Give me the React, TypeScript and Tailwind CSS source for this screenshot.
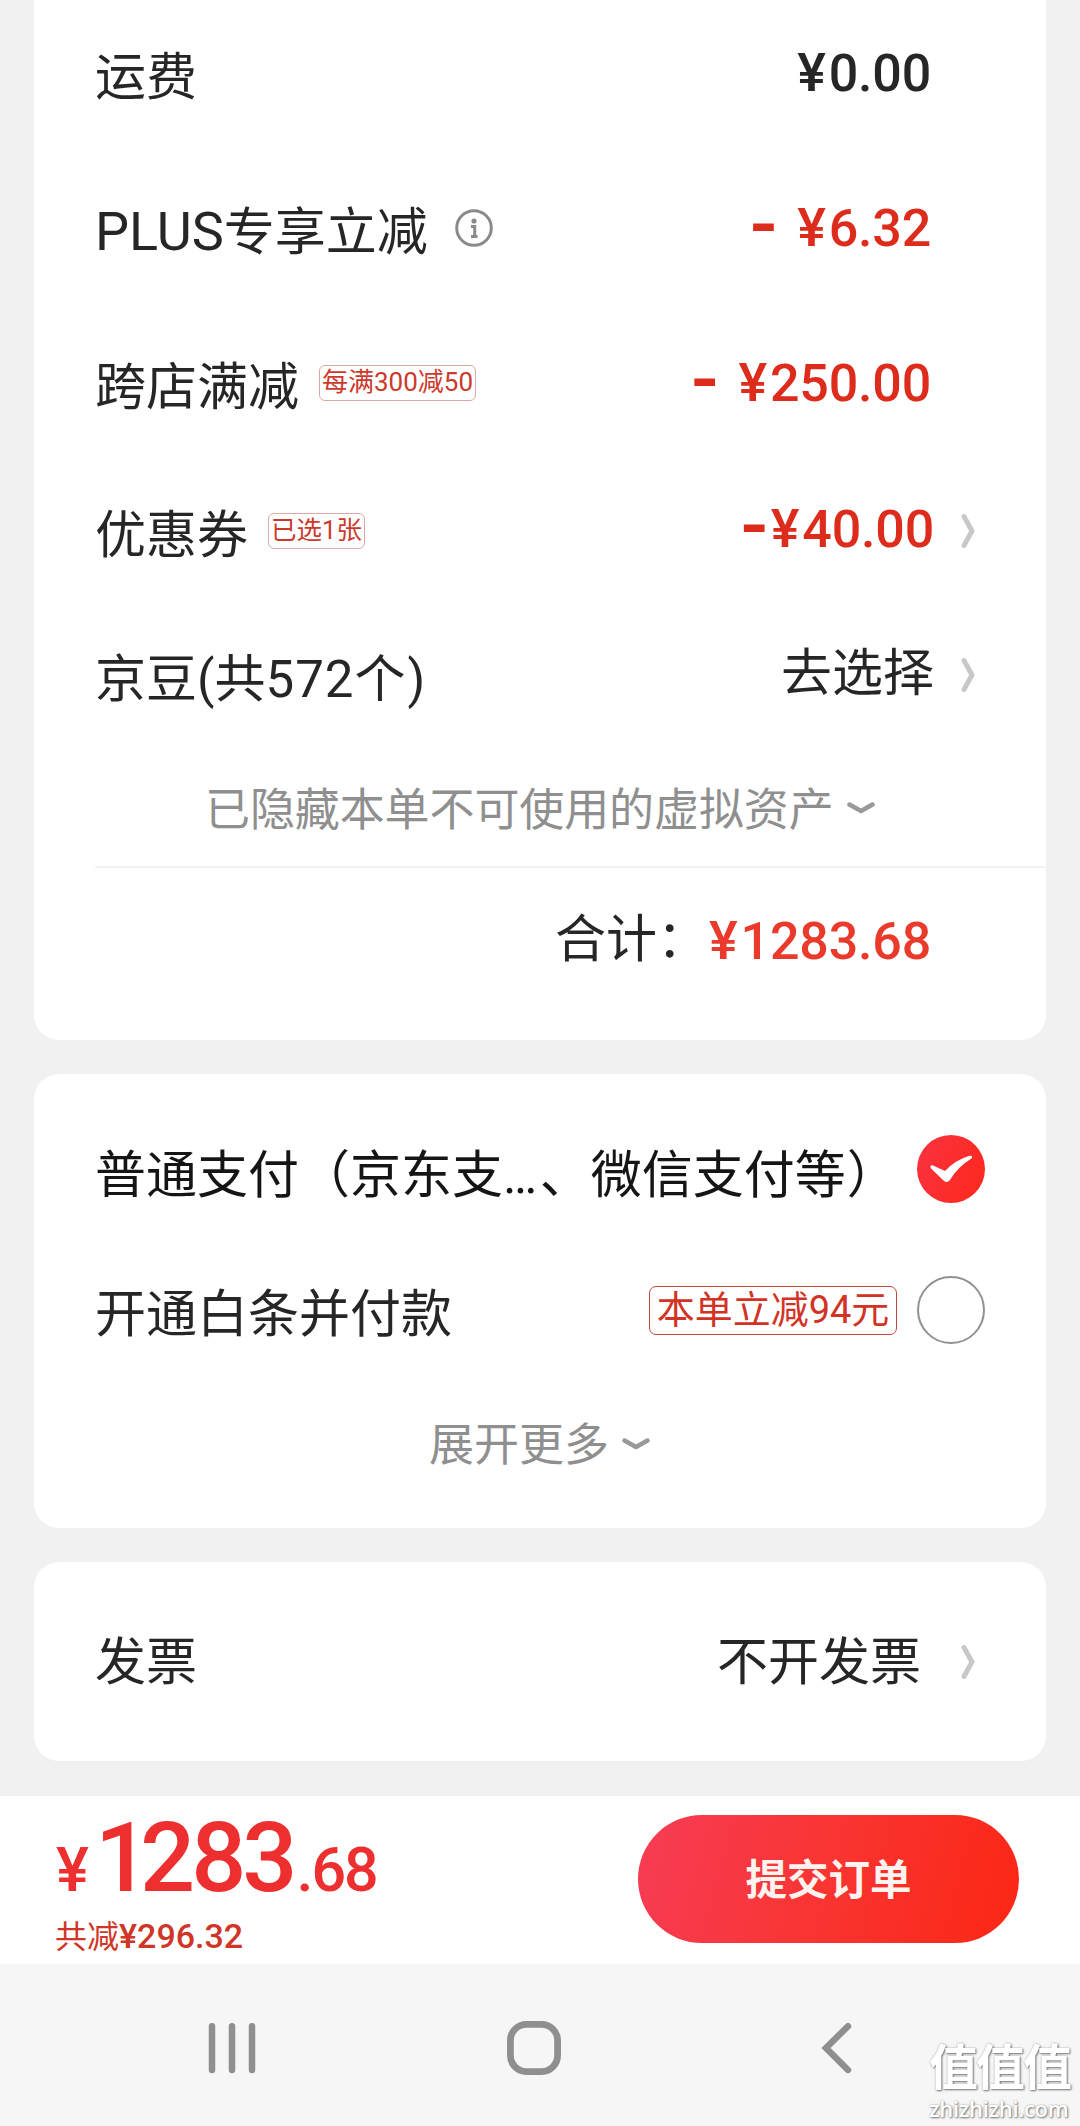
import type { ReactNode } from "react";

function ArrowRight() {
  return (
    <svg width="14" height="36" viewBox="0 0 14 36" fill="none" className="mr-[11px] ml-[27px] shrink-0">
      <path d="M3 3.5 L11 18 L3 32.5" stroke="#c8c8c8" strokeWidth="5" strokeLinecap="round" strokeLinejoin="miter" />
    </svg>
  );
}

function ArrowDown() {
  return (
    <svg width="28" height="13" viewBox="0 0 28 13" fill="none" className="mb-[3px] ml-[13px] shrink-0">
      <path d="M2.5 2.5 L14 9 L25.5 2.5" stroke="#999999" strokeWidth="4.5" strokeLinecap="round" strokeLinejoin="round" />
    </svg>
  );
}

function InfoIcon() {
  return (
    <svg width="38" height="38" viewBox="0 0 38 38" fill="none" className="ml-[27px] mb-[9px]">
      <circle cx="19" cy="19" r="17.3" stroke="#8a8a8a" strokeWidth="3" />
      <circle cx="19" cy="12" r="2.6" fill="#8a8a8a" />
      <path d="M16 17.5 H19.7 V27 M16 27.5 H22.5" stroke="#8a8a8a" strokeWidth="3" />
    </svg>
  );
}

function CheckedIcon() {
  return (
    <svg width="68" height="68" viewBox="0 0 68 68">
      <defs>
        <linearGradient id="check" x1="0" y1="0" x2="1" y2="0.4">
          <stop offset="0" stopColor="#fa3240" />
          <stop offset="1" stopColor="#fd2a22" />
        </linearGradient>
      </defs>
      <circle cx="34" cy="34" r="34" fill="url(#check)" />
      <path
        d="M15.5 30.3 L28 36 Q38 25 52.5 20.7 Q56.5 20.3 54.5 23.5 Q40.5 32 33 45 Q29.5 49 26 45 L13.6 33 Q12.8 29.8 15.5 30.3 Z"
        fill="#fff"
      />
    </svg>
  );
}

function Row({ label, height, children }: { label: ReactNode; height: string; children: ReactNode }) {
  return (
    <div className={`flex items-center justify-between ${height}`}>
      <div className="flex items-center">{label}</div>
      <div className="flex items-center">{children}</div>
    </div>
  );
}

function Price({ value, className }: { value: string; className: string }) {
  return (
    <span className={`text-[52px] leading-[52px] font-medium tracking-[-0.2px] ${className}`}>
      <span className="mr-[3px] text-[54px] leading-[52px]">¥</span>
      {value}
    </span>
  );
}

function Minus({ className }: { className: string }) {
  return <span className={`text-[80px] leading-[52px] font-medium text-[#dd2c1c] ${className}`}>-</span>;
}

const tag = "flex items-center justify-center rounded-[6px] border border-[#dba8a2] text-[#cb3a2c]";

export default function App() {
  return (
    <div className="relative flex h-[2126px] w-[1080px] flex-col overflow-hidden bg-[#f1f1f1] font-[Roboto,'Noto_Sans_CJK_SC',sans-serif] text-[51px] leading-none text-[#262626]">
      {/* Price breakdown */}
      <section className="mx-[34px] h-[1040px] shrink-0 rounded-b-[25px] bg-white pl-[61px]">
        <div className="pr-[60px]">
          <Row height="h-[155px]" label="运费">
            <Price value="0.00" className="mr-[55px] pb-[9px]" />
          </Row>
          <Row height="h-[155px]" label={<><span className="pb-[1px] text-[54px]">PLUS</span>专享立减<InfoIcon /></>}>
            <Minus className="mr-[20px] pb-[15px]" />
            <Price value="6.32" className="mr-[55px] pb-[9px] text-[#dd2c1c]" />
          </Row>
          <Row
            height="h-[155px]"
            label={<>跨店满减<span className={`${tag} mb-[9px] ml-[20px] h-[36px] w-[157px] pb-[2px] text-[26px]`}>每满300减50</span></>}
          >
            <Minus className="mr-[20px] pb-[15px]" />
            <Price value="250.00" className="mr-[55px] pb-[9px] text-[#dd2c1c]" />
          </Row>
          <Row
            height="h-[141px]"
            label={<>优惠券<span className={`${tag} mb-[9px] ml-[20px] h-[36px] w-[97px] pb-[1px] text-[25.5px]`}>已选1张</span></>}
          >
            <Minus className="mr-[3px] pb-[19px]" />
            <Price value="40.00" className="pb-[13px] text-[#dd2c1c]" />
            <span className="pb-[9px]"><ArrowRight /></span>
          </Row>
          <Row height="h-[146px]" label={<>京豆(共<span className="tracking-[1px]">572</span>个<span className="ml-[2px]">)</span></>}>
            <span className="pb-[12px]">去选择</span>
            <span className="pb-[9px]"><ArrowRight /></span>
          </Row>
          <div className="flex h-[114px] items-center pt-[2px] pl-[110px] text-[45px] text-[#8f8f8f]">
            <span className="tracking-[-0.1px]">已隐藏本单不可使用的虚拟资产</span>
            <ArrowDown />
          </div>
        </div>
        <div className="h-[2px] bg-[#f2f2f2]" />
        <div className="flex h-[143px] items-center justify-end pr-[115px]">
          <span className="mr-[1px]">合计：</span>
          <Price value="1283.68" className="pt-[4px] text-[#e93a2c]" />
        </div>
      </section>

      {/* Payment methods */}
      <section className="mx-[34px] mt-[34px] h-[454px] shrink-0 rounded-[25px] bg-white pt-[32px] pr-[61px] pl-[61px]">
        <Row
          height="h-[139px]"
          label={
            <span className="text-[#151515]">
              普通支付（京东支<span className="tracking-[2.5px]">…</span>、微信支付等<span className="ml-[1px]">）</span>
            </span>
          }
        >
          <span className="pb-[13px]"><CheckedIcon /></span>
        </Row>
        <Row height="h-[138px]" label="开通白条并付款">
          <span className="mb-[8px] flex h-[49px] w-[248px] items-center justify-center rounded-[7px] border-[1.5px] border-[#c4453a] text-[38px] text-[#d23324]">
            本单立减94元
          </span>
          <span className="mb-[8px] ml-[20px] h-[68px] w-[68px] rounded-full border-2 border-[#919191]" />
        </Row>
        <div className="flex h-[125px] items-center pl-[334px] text-[45px] text-[#8f8f8f]">
          展开更多
          <ArrowDown />
        </div>
      </section>

      {/* Invoice */}
      <section className="mx-[34px] mt-[34px] h-[199px] shrink-0 rounded-[25px] bg-white pr-[60px] pl-[61px]">
        <Row height="h-[200px]" label="发票">
          <span className="mr-[13px]">不开发票</span>
          <ArrowRight />
        </Row>
      </section>

      {/* Submit bar */}
      <footer className="mt-[35px] flex h-[168px] shrink-0 justify-between bg-white pr-[61px] pl-[55px]">
        <div>
          <div className="mt-[13px] flex h-[98px] items-baseline font-medium text-[#ed2f30]">
            <span className="ml-[1px] text-[62px] leading-[98px]">¥</span>
            <span className="ml-[6px] text-[97px] leading-[98px] tracking-[-4px]">
              <span className="tracking-[-10px]">1</span>283
            </span>
            <span className="ml-[3px] text-[61px] leading-[98px] tracking-[-2px]">.68</span>
          </div>
          <div className="mt-[9px] text-[32px] leading-[40px] text-[#cf3628]">
            共减<span className="text-[34px] font-medium">¥296.32</span>
          </div>
        </div>
        <button className="mt-[19px] h-[128px] w-[381px] rounded-full bg-[linear-gradient(105deg,#f73b50_8%,#f93431_50%,#fb2817_95%)] pt-[4px] text-[41.5px] font-bold text-[#fff3f0]">
          提交订单
        </button>
      </footer>

      {/* System navigation */}
      <nav className="relative h-[162px] shrink-0 bg-[#f6f6f6]">
        <div className="flex items-start pt-[57px] pl-[208px]">
          <svg width="48" height="54" viewBox="0 0 48 54" fill="none" stroke="#8f8f8f" strokeWidth="6.5" strokeLinecap="round">
            <path d="M4 5.2 V49 M24 5.2 V49 M44 5.2 V49" />
          </svg>
          <svg width="54" height="54" viewBox="0 0 54 54" fill="none" className="ml-[251px]">
            <rect x="3.4" y="3.4" width="47.2" height="47.2" rx="16" stroke="#8f8f8f" strokeWidth="6.8" />
          </svg>
          <svg width="31" height="54" viewBox="0 0 31 54" fill="none" className="ml-[260px]">
            <path d="M27 5.2 L5 27 L27 49" stroke="#8f8f8f" strokeWidth="6.5" strokeLinecap="round" />
          </svg>
        </div>
        <div className="absolute right-[6px] bottom-[4px] w-[145px] font-bold text-white [text-shadow:1px_1px_2px_#777,0_0_2px_#aaa]">
          <div className="text-[49px] leading-[52px] tracking-[-2px]">值值值</div>
          <div className="font-['Open_Sans'] text-[22px] leading-[27px] font-semibold tracking-[-0.3px] whitespace-nowrap">zhizhizhi.com</div>
        </div>
      </nav>
    </div>
  );
}
